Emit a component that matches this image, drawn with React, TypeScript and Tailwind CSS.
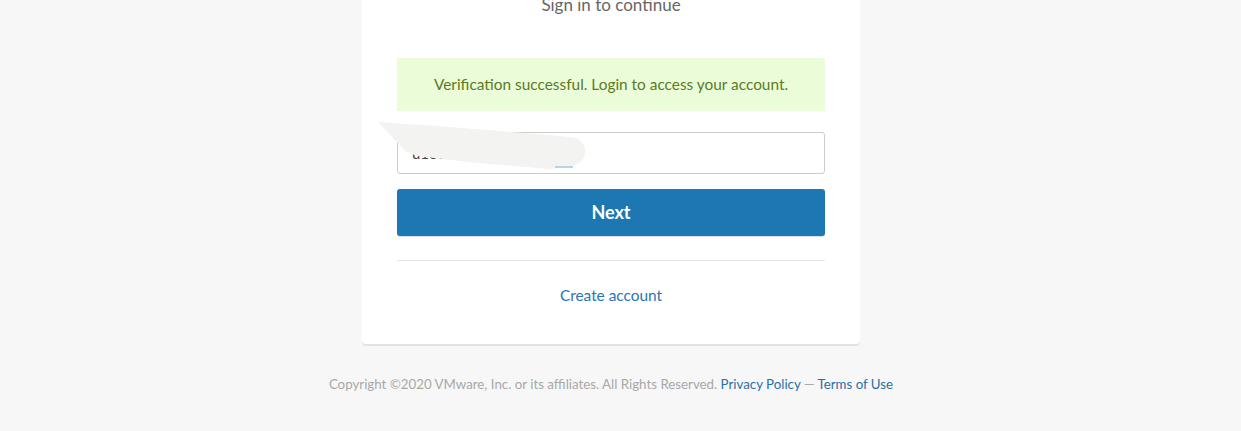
export default function App() {
  return (
    <div
      className="min-h-[431px] bg-[#f7f7f7] flex flex-col items-center overflow-hidden pr-[19px]"
      style={{ fontFamily: "Lato, 'Open Sans', sans-serif" }}
    >
      <div className="w-[498px] -mt-[14px] bg-white rounded-b-[4px] shadow-[0_2px_0_#e3e3e3] px-[35px] pb-[37px]">
        <p className="text-center text-[17px] text-[#666] pt-[7px] leading-[24px]">Sign in to continue</p>
        <div className="mt-[41px] h-[53px] bg-[#ebfdd8] flex items-center justify-center text-[15.4px] text-[#5b7a25]">
          Verification successful. Login to access your account.
        </div>
        <div className="relative mt-[21px]">
          <div className="h-[42px] border border-[#ccc] rounded-[3px] flex items-center px-[14px] text-[15px] text-[#444]">
            u131
          </div>
          <svg className="absolute -left-[20px] -top-[10px]" width="220" height="50" viewBox="0 0 220 50">
            <path
              d="M1 0 L73 5 L173 13 L193 15 Q209 17 208 31 Q206 44 190 45 L173 47 L100 41 L40 34 L28 29 Z"
              fill="#f3f3f2"
            />
            <rect x="178" y="44" width="18" height="2" fill="#b5d4ec" />
          </svg>
        </div>
        <button className="mt-[15px] w-full h-[47px] bg-[#1c77b2] text-white font-bold text-[18px] rounded-[3px] shadow-[0_1px_1px_#d5dde3]">
          Next
        </button>
        <div className="mt-[24px] h-px bg-[#e5e5e5]"></div>
        <p className="mt-[23px] text-center text-[15.4px] text-[#2a74b6]">Create account</p>
      </div>
      <p className="mt-[31px] text-[13.3px] text-[#a8a8a8]">
        Copyright ©2020 VMware, Inc. or its affiliates. All Rights Reserved.{" "}
        <a className="text-[#2a6fa8]">Privacy Policy</a> — <a className="text-[#2a6fa8]">Terms of Use</a>
      </p>
    </div>
  );
}
